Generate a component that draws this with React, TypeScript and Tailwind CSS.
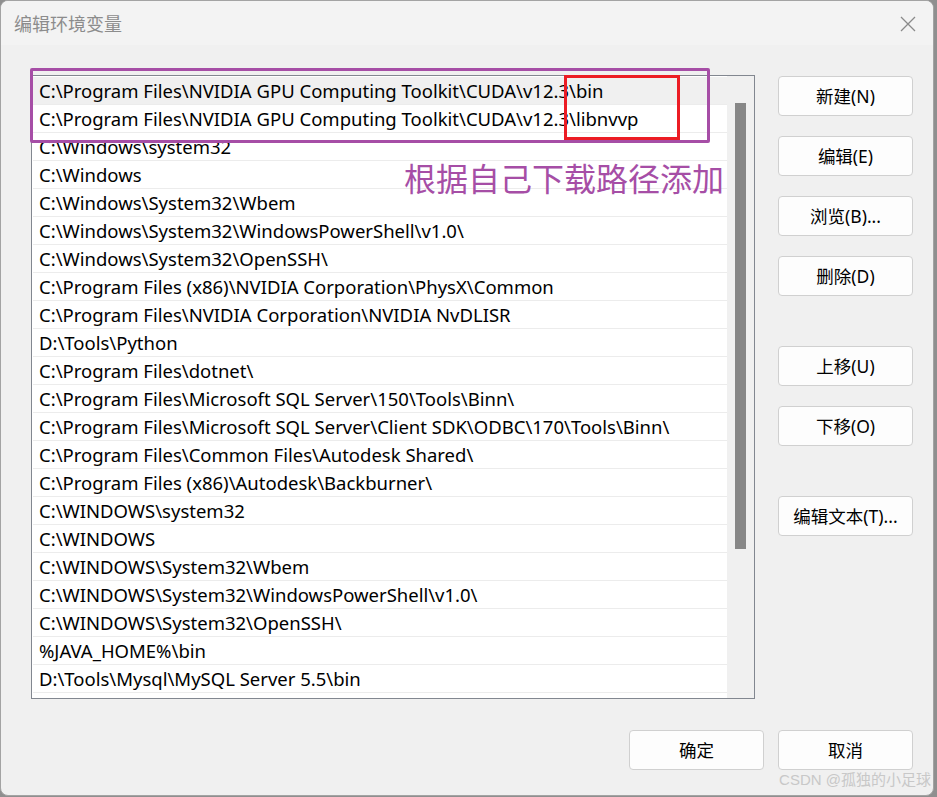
import React from "react";

const rows = [
  "C:\\Program Files\\NVIDIA GPU Computing Toolkit\\CUDA\\v12.3\\bin",
  "C:\\Program Files\\NVIDIA GPU Computing Toolkit\\CUDA\\v12.3\\libnvvp",
  "C:\\Windows\\system32",
  "C:\\Windows",
  "C:\\Windows\\System32\\Wbem",
  "C:\\Windows\\System32\\WindowsPowerShell\\v1.0\\",
  "C:\\Windows\\System32\\OpenSSH\\",
  "C:\\Program Files (x86)\\NVIDIA Corporation\\PhysX\\Common",
  "C:\\Program Files\\NVIDIA Corporation\\NVIDIA NvDLISR",
  "D:\\Tools\\Python",
  "C:\\Program Files\\dotnet\\",
  "C:\\Program Files\\Microsoft SQL Server\\150\\Tools\\Binn\\",
  "C:\\Program Files\\Microsoft SQL Server\\Client SDK\\ODBC\\170\\Tools\\Binn\\",
  "C:\\Program Files\\Common Files\\Autodesk Shared\\",
  "C:\\Program Files (x86)\\Autodesk\\Backburner\\",
  "C:\\WINDOWS\\system32",
  "C:\\WINDOWS",
  "C:\\WINDOWS\\System32\\Wbem",
  "C:\\WINDOWS\\System32\\WindowsPowerShell\\v1.0\\",
  "C:\\WINDOWS\\System32\\OpenSSH\\",
  "%JAVA_HOME%\\bin",
  "D:\\Tools\\Mysql\\MySQL Server 5.5\\bin",
];

const font = { fontFamily: '"Noto Sans", "Noto Sans CJK SC", sans-serif' };

function Btn({ children }: { children: React.ReactNode }) {
  return (
    <div className="w-[135px] h-[40px] flex items-center justify-center bg-[#fdfdfd] border border-[#d0d0d0] rounded-[4px] text-[17.5px] text-black">
      {children}
    </div>
  );
}

export default function App() {
  return (
    <div className="w-[937px] h-[797px] bg-[#8f8f8f] overflow-hidden" style={font}>
      <div className="relative w-[934px] h-[796px] bg-[#f0f0f0] border border-[#a3a3a3] rounded-[8px] overflow-hidden flex flex-col">
        <div className="h-[44px] bg-[#f3f3f3] flex items-center justify-between pl-[13px] pr-[16px] shrink-0">
          <span className="text-[18px] text-[#8c8c8c]" style={{ fontFamily: '"Noto Sans CJK SC", sans-serif' }}>编辑环境变量</span>
          <svg width="18" height="18" viewBox="0 0 18 18" className="mt-[1px]">
            <path d="M2 2 L16 16 M16 2 L2 16" stroke="#8a8a8a" strokeWidth="1.3" fill="none" />
          </svg>
        </div>
        <div className="flex flex-1 pt-[30px] pl-[30px]">
          <div className="w-[724px] h-[624px] bg-white border border-[#828790] flex shrink-0">
            <div className="flex-1 pt-[1px] pl-[1px] overflow-hidden">
              {rows.map((r, i) => (
                <div
                  key={i}
                  className={`h-[28px] flex items-center pl-[6px] text-[18.5px] text-black whitespace-nowrap border-b border-[#ececec] ${i === 0 ? "bg-[#f0f0f0]" : ""}`}
                >
                  {r}
                </div>
              ))}
            </div>
            <div className="w-[27px] bg-[#f0f0f0] flex justify-center pt-[27px]">
              <div className="w-[11px] h-[446px] bg-[#878787]" />
            </div>
          </div>
          <div className="ml-[23px] pt-[1px] flex flex-col">
            <div className="flex flex-col gap-[20px]">
              <Btn>新建(N)</Btn>
              <Btn>编辑(E)</Btn>
              <Btn>浏览(B)...</Btn>
              <Btn>删除(D)</Btn>
            </div>
            <div className="flex flex-col gap-[20px] mt-[50px]">
              <Btn>上移(U)</Btn>
              <Btn>下移(O)</Btn>
            </div>
            <div className="mt-[50px]">
              <Btn>编辑文本(T)...</Btn>
            </div>
          </div>
        </div>
        <div className="flex justify-end gap-[14px] pr-[20px] pb-[25px] shrink-0">
          <Btn>确定</Btn>
          <Btn>取消</Btn>
        </div>

        {/* annotations */}
        <div className="absolute left-[29px] top-[67px] w-[680px] h-[75px] border-[3px] border-[#a64ea6] rounded-[2px]" />
        <div className="absolute left-[563px] top-[74px] w-[116px] h-[65px] border-[3px] border-[#ec1c24]" />
        <div className="absolute left-[403px] top-[154px] text-[32px] leading-[44px] text-[#a64ea6]" style={{ fontFamily: '"Noto Sans CJK SC", sans-serif' }}>
          根据自己下载路径添加
        </div>
        <div className="absolute right-[2px] bottom-[4px] text-[15px] text-[#c8c8c8]" style={{ fontFamily: '"Liberation Sans", "Noto Sans CJK SC", sans-serif' }}>
          CSDN @孤独的小足球
        </div>
      </div>
    </div>
  );
}
